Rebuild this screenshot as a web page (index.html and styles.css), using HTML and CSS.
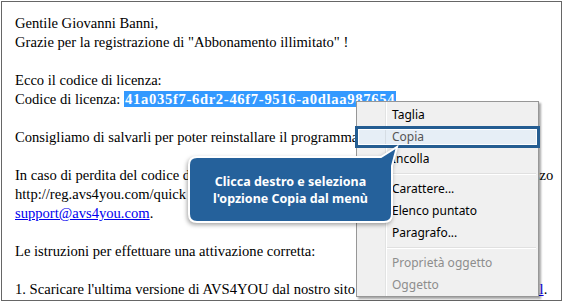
FILE: index.html
```html
<!DOCTYPE html>
<html lang="it">
<head>
    <meta charset="UTF-8">
    <title>Codice di licenza</title>
    <link rel="stylesheet" href="styles.css">
</head>
<body>
    <div class="mail">
        <p>Gentile Giovanni Banni,<br>Grazie per la registrazione di "Abbonamento illimitato" !</p>
        <p>Ecco il codice di licenza:<br>Codice di licenza: <span class="selected">41a035f7-6dr2-46f7-9516-a0dlaa987654</span></p>
        <p>Consigliamo di salvarli per poter reinstallare il programma in futuro.</p>
        <p>In caso di perdita del codice di licenza, potete recuperarlo in qualsiasi momento all'indirizzo<br>http://reg.avs4you.com/quick o scrivere al servizio di supporto tecnico<br><a href="#">support@avs4you.com</a>.</p>
        <p>Le istruzioni per effettuare una attivazione corretta:</p>
        <p>1. Scaricare l'ultima versione di AVS4YOU dal nostro sito <a href="#" class="site-link">avs4you.com/it/download.html</a>.</p>
    </div>

    <div class="callout">
        <svg class="callout-shape" width="216" height="86" viewBox="0 0 216 86">
            <path d="M12 14 L196 14 L212 4 L207 23 L207 71 Q207 79 199 79 L12 79 Q4 79 4 71 L4 22 Q4 14 12 14 Z" fill="#25619b" stroke="#fff" stroke-width="2"/>
        </svg>
        <div class="callout-text">Clicca destro e seleziona<br>l'opzione Copia dal menù</div>
    </div>

    <div class="menu">
        <div class="menu-item">Taglia</div>
        <div class="menu-item active">Copia</div>
        <div class="menu-item">Incolla</div>
        <div class="menu-sep"></div>
        <div class="menu-item">Carattere...</div>
        <div class="menu-item">Elenco puntato</div>
        <div class="menu-item">Paragrafo...</div>
        <div class="menu-sep"></div>
        <div class="menu-item disabled">Proprietà oggetto</div>
        <div class="menu-item disabled">Oggetto</div>
    </div>
</body>
</html>
```

FILE: styles.css
```css
body {
    margin: 0;
    background: #fff;
    font-family: "Liberation Serif", "Times New Roman", serif;
}

.mail {
    margin: 1px 0 0 1px;
    width: 546px;
    height: 286px;
    padding: 12px 0 0 13px;
    border: 1px solid #666;
    overflow: hidden;
    white-space: nowrap;
    font-size: 14.6px;
    line-height: 19px;
    color: #000;
}

.mail p {
    margin: 0 0 19px 0;
}

.mail a {
    color: #0000ee;
}

.site-link {
    letter-spacing: 0.12px;
}

.selected {
    background: #3399ff;
    color: #fff;
    font-weight: bold;
    letter-spacing: 0.68px;
    padding: 0 1px 0 1px;
}

.callout {
    position: absolute;
    left: 185px;
    top: 143px;
    width: 216px;
    height: 86px;
    z-index: 2;
}

.callout-shape {
    display: block;
    filter: drop-shadow(-1px 2px 2px rgba(0, 0, 0, 0.35));
}

.callout-text {
    position: absolute;
    left: 4px;
    top: 14px;
    width: 203px;
    height: 65px;
    display: flex;
    align-items: center;
    justify-content: center;
    text-align: center;
    font-family: "Noto Sans", "DejaVu Sans", sans-serif;
    font-weight: bold;
    font-size: 12.5px;
    line-height: 17px;
    color: #fff;
}

.menu {
    position: absolute;
    left: 356px;
    top: 101px;
    width: 181px;
    padding: 2px 0 0 0;
    border: 1px solid #979797;
    background: #f0f0f0 linear-gradient(to right, transparent 28px, #e2e3e3 28px, #e2e3e3 29px, #fff 29px, #fff 30px, transparent 30px);
    box-shadow: 2px 2px 2px rgba(0, 0, 0, 0.35);
    font-family: "Noto Sans", "Segoe UI", sans-serif;
    font-size: 12px;
    color: #000;
}

.menu-item {
    height: 22px;
    line-height: 22px;
    padding-left: 35px;
}

.menu-item.active {
    position: relative;
    margin: 0 -2px 0 -2px;
    padding-left: 34px;
    height: 16px;
    line-height: 16px;
    border: 3px solid #245d92;
    background: #e6eef6 linear-gradient(to right, transparent 27px, #d6dde4 27px, #d6dde4 28px, transparent 28px);
    box-shadow: inset 0 0 0 1px #fff;
    color: #555;
}

.menu-item.disabled {
    color: #8d8d8d;
}

.menu-sep {
    height: 8px;
    margin-left: 30px;
    margin-right: 2px;
    background: linear-gradient(to bottom, transparent 3px, #e0e0e0 3px, #e0e0e0 4px, #fff 4px, #fff 5px, transparent 5px);
}
```
